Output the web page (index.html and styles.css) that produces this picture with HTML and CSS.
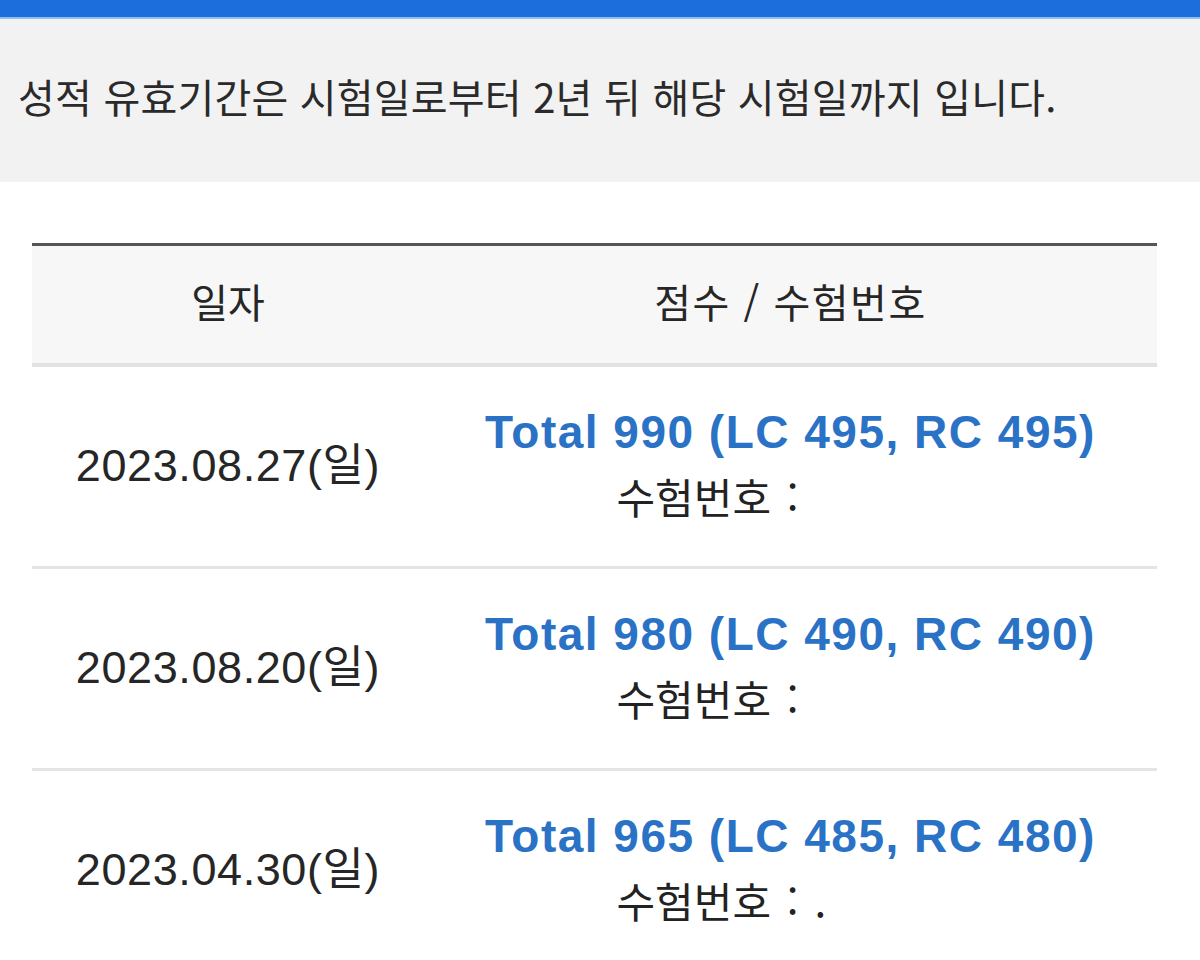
FILE: index.html
```html
<!DOCTYPE html>
<html lang="ko">
<head>
<meta charset="utf-8">
<title>성적 조회</title>
<link rel="stylesheet" href="styles.css">
</head>
<body>
<div class="topbar"></div>
<div class="notice">성적 유효기간은 시험일로부터 2년 뒤 해당 시험일까지 입니다.</div>
<div class="table-wrap">
  <table class="scores">
    <thead>
      <tr>
        <th class="col-date">일자</th>
        <th class="col-score">점수 / 수험번호</th>
      </tr>
    </thead>
    <tbody>
      <tr>
        <td class="date">2023.08.27(<span class="ko">일</span>)</td>
        <td class="score">
          <div class="total">Total 990 (LC 495, RC 495)</div>
          <div class="exam">수험번호 :<span class="redacted"></span></div>
        </td>
      </tr>
      <tr>
        <td class="date">2023.08.20(<span class="ko">일</span>)</td>
        <td class="score">
          <div class="total">Total 980 (LC 490, RC 490)</div>
          <div class="exam">수험번호 :<span class="redacted"></span></div>
        </td>
      </tr>
      <tr>
        <td class="date">2023.04.30(<span class="ko">일</span>)</td>
        <td class="score">
          <div class="total">Total 965 (LC 485, RC 480)</div>
          <div class="exam">수험번호 :<span class="redacted">.</span></div>
        </td>
      </tr>
    </tbody>
  </table>
</div>
</body>
</html>
```
FILE: styles.css
```css
html, body {
  margin: 0;
  padding: 0;
  background: #ffffff;
}

body {
  font-family: "Liberation Sans", "Noto Sans CJK KR", sans-serif;
  color: #222222;
}

.topbar {
  height: 17px;
  background: #1b6edb;
  border-bottom: 2px solid #8cc0f2;
}

.notice {
  height: 163px;
  box-sizing: border-box;
  background: #f2f2f2;
  padding-left: 18px;
  display: flex;
  align-items: center;
  padding-bottom: 10px;
  font-family: "Noto Sans CJK KR", "Liberation Sans", sans-serif;
  font-size: 40px;
  color: #2a2a2a;
  letter-spacing: 0.2px;
}

.table-wrap {
  padding: 61px 43px 0 32px;
}

.scores {
  width: 100%;
  border-collapse: collapse;
  table-layout: fixed;
}

.scores thead tr {
  background: #f7f7f7;
  border-top: 3px solid #555555;
  border-bottom: 4px solid #e2e2e2;
}

.scores th {
  height: 109px;
  padding: 0 0 8px;
  font-family: "Noto Sans CJK KR", "Liberation Sans", sans-serif;
  font-weight: normal;
  font-size: 40px;
  color: #262626;
  text-align: center;
  vertical-align: middle;
}

.col-score {
  letter-spacing: 1.5px;
}

.col-date {
  width: 392px;
}

.scores tbody tr {
  border-bottom: 3px solid #e4e4e4;
}

.scores td {
  height: 189px;
  padding: 0;
  text-align: center;
  vertical-align: middle;
}

.date {
  font-size: 45px;
  color: #262626;
  letter-spacing: 0.6px;
}

.scores td.date {
  padding: 0 0 10px;
}

.ko {
  font-family: "Noto Sans CJK KR", sans-serif;
}

.scores td.score {
  padding: 2px 0 8px;
}

.total {
  font-size: 46px;
  font-weight: bold;
  color: #2a72c6;
  line-height: 64px;
  letter-spacing: 1.5px;
}

.exam {
  font-family: "Noto Sans CJK KR", "Liberation Sans", sans-serif;
  font-size: 42px;
  color: #222222;
  line-height: 64px;
  word-spacing: 4px;
}

.redacted {
  display: inline-block;
  width: 150px;
  padding-left: 16px;
  text-align: left;
  vertical-align: top;
}
```
